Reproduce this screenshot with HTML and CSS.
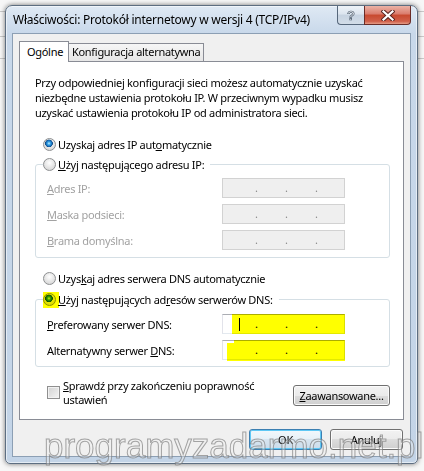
FILE: index.html
```html
<!DOCTYPE html>
<html lang="pl">
<head>
    <meta charset="UTF-8">
    <meta name="viewport" content="width=device-width, initial-scale=1.0">
    <title>Właściwości: Protokół internetowy w wersji 4 (TCP/IPv4)</title>
    <link rel="stylesheet" href="styles.css">
</head>
<body>
    <div class="window">
        <div class="titlebar">
            <div class="title">Właściwości: Protokół internetowy w wersji 4 (TCP/IPv4)</div>
            <div class="caption-buttons">
                <div class="cap-btn help">?</div>
                <div class="cap-btn close">
                    <svg width="14" height="11" viewBox="0 0 14 11">
                        <path d="M2.5 1.5 L11.5 9.5 M11.5 1.5 L2.5 9.5" stroke="#5a2521" stroke-width="4.2" stroke-linecap="square" fill="none"/>
                        <path d="M2.5 1.5 L11.5 9.5 M11.5 1.5 L2.5 9.5" stroke="#ffffff" stroke-width="2.2" stroke-linecap="square" fill="none"/>
                    </svg>
                </div>
            </div>
        </div>

        <div class="client">
            <div class="tabs">
                <div class="tab active">Ogólne</div>
                <div class="tab">Konfiguracja alternatywna</div>
            </div>

            <div class="page">
                <p class="intro">Przy odpowiedniej konfiguracji sieci możesz automatycznie uzyskać<br>niezbędne ustawienia protokołu IP. W przeciwnym wypadku musisz<br>uzyskać ustawienia protokołu IP od administratora sieci.</p>

                <div class="option ip-auto"><span class="radio on"></span><span>Uzyskaj adres IP aut<u>o</u>matycznie</span></div>

                <fieldset class="group">
                    <legend class="option"><span class="radio"></span><span><u>U</u>żyj następującego adresu IP:</span></legend>
                    <div class="fields">
                        <div class="field disabled">
                            <label><u>A</u>dres IP:</label>
                            <div class="ip"><span>.</span><span>.</span><span>.</span></div>
                        </div>
                        <div class="field disabled">
                            <label><u>M</u>aska podsieci:</label>
                            <div class="ip"><span>.</span><span>.</span><span>.</span></div>
                        </div>
                        <div class="field disabled">
                            <label><u>B</u>rama domyślna:</label>
                            <div class="ip"><span>.</span><span>.</span><span>.</span></div>
                        </div>
                    </div>
                </fieldset>

                <div class="option dns-auto"><span class="radio"></span><span>Uzys<u>k</u>aj adres serwera DNS automatycznie</span></div>

                <fieldset class="group dns-group">
                    <legend class="option marked"><span class="radio on"></span><span><u>U</u>żyj następujących ad<u>r</u>esów serwerów DNS:</span><span class="hl hl-radio"></span></legend>
                    <div class="fields">
                        <div class="field">
                            <label><u>P</u>referowany serwer DNS:</label>
                            <div class="ip"><span>.</span><span>.</span><span>.</span><i class="caret"></i><i class="hl hl-box1"></i></div>
                        </div>
                        <div class="field">
                            <label>Alternatywny serwer <u>D</u>NS:</label>
                            <div class="ip"><span>.</span><span>.</span><span>.</span><i class="hl hl-box2"></i></div>
                        </div>
                    </div>
                </fieldset>

                <div class="check-row">
                    <span class="checkbox"></span>
                    <label class="check-label"><u>S</u>prawdź przy zakończeniu poprawność ustawień</label>
                    <button class="btn advanced"><u>Z</u>aawansowane...</button>
                </div>
            </div>

            <div class="dialog-buttons">
                <button class="btn default">OK</button>
                <button class="btn">Anuluj</button>
            </div>
        </div>
    </div>

    <div class="watermark">programyzadarmo.net.pl</div>
</body>
</html>
```

FILE: styles.css
```css
body {
    margin: 0;
    width: 424px;
    height: 471px;
    overflow: hidden;
    position: relative;
    background-color: #f7f7f7;
    background-image:
        linear-gradient(#c9c9c9, #c9c9c9),
        linear-gradient(#c9c9c9, #c9c9c9),
        linear-gradient(#c9c9c9, #c9c9c9);
    background-size: 100% 1px;
    background-position: 0 11px, 0 36px, 0 58px;
    background-repeat: no-repeat;
    font-family: "Noto Sans", "Segoe UI", sans-serif;
    font-size: 11px;
    letter-spacing: -0.3px;
    color: #000;
}

.window {
    margin: 5px 6px 0 5px;
    height: 459px;
    box-sizing: border-box;
    border: 1px solid #5d6e81;
    border-radius: 7px 7px 5px 5px;
    background: linear-gradient(#dfe9f4, #c8d8ea 28px, #c3d4e7);
    box-shadow: 0 0 5px rgba(0, 0, 0, 0.55), inset 0 0 0 1px rgba(255, 255, 255, 0.55);
    padding: 0 6px 6px;
    display: flex;
    flex-direction: column;
}

.titlebar {
    height: 27px;
    display: flex;
    align-items: flex-start;
}
.title {
    flex: 1;
    padding-left: 1px;
    line-height: 27px;
    font-size: 12px;
    letter-spacing: -0.25px;
    white-space: nowrap;
}
.caption-buttons {
    display: flex;
}
.cap-btn {
    height: 19px;
    box-sizing: border-box;
    border: 1px solid #56677b;
    border-top: none;
    display: flex;
    align-items: center;
    justify-content: center;
}
.help {
    width: 27px;
    border-right: none;
    border-radius: 0 0 0 4px;
    background: linear-gradient(#eef3f8, #dce5ef 45%, #c6d3e1 50%, #d3dde8);
    font-family: "Liberation Sans", sans-serif;
    font-weight: bold;
    font-size: 13px;
    letter-spacing: 0;
    color: #f5f7fa;
    -webkit-text-stroke: 0.7px #4b5a6b;
}
.close {
    width: 47px;
    border-color: #6a2c27;
    border-radius: 0 0 4px 0;
    background: linear-gradient(#ebb3a6, #da7b6c 45%, #c8492f 50%, #d0604a 85%, #e59c86);
}

.client {
    flex: 1;
    background: #f0f0f0;
    border: 1px solid #8c9fb4;
    padding: 0 6px;
    display: flex;
    flex-direction: column;
}

.tabs {
    display: flex;
    align-items: flex-end;
    margin-top: 7px;
    height: 20px;
}
.tab {
    height: 18px;
    box-sizing: border-box;
    border: 1px solid #898c95;
    border-bottom: none;
    padding-left: 3px;
    line-height: 16px;
    width: 136px;
    margin-left: -1px;
    background: linear-gradient(#f6f6f6, #e6e6e6);
    white-space: nowrap;
}
.tab.active {
    position: relative;
    z-index: 1;
    height: 21px;
    width: 50px;
    margin: 0 0 -1px 0;
    padding-left: 7px;
    line-height: 19px;
    background: #fff;
}

.page {
    height: 359px;
    box-sizing: border-box;
    border: 1px solid #898c95;
    background: #fff;
    padding: 13px 13px 0 15px;
}

.intro {
    margin: 0;
    line-height: 15px;
}

.option {
    display: flex;
    align-items: center;
    gap: 2px;
    height: 15px;
    padding-left: 8px;
    white-space: nowrap;
}
.ip-auto {
    margin-top: 17px;
}
.dns-auto {
    margin-top: 13px;
}

.radio {
    flex: none;
    width: 13px;
    height: 13px;
    box-sizing: border-box;
    border: 1px solid #8d8f91;
    border-radius: 50%;
    background: radial-gradient(circle at 50% 35%, #ffffff, #e4e4e4 55%, #cfcfcf);
}
.radio.on {
    background:
        radial-gradient(circle at 45% 40%, #c9f0ff 0, #3aa6e8 1.5px, #1569b5 3px, #0c4a87 3.6px, transparent 4.1px),
        radial-gradient(circle at 50% 35%, #ffffff, #e4e4e4 55%, #cfcfcf);
}

.group {
    margin: 5px 0 0;
    padding: 0;
    min-width: 0;
    border: 1px solid #d5dfe5;
    border-radius: 3px;
}
.group legend {
    margin-left: 7px;
    padding: 0 6px 0 0;
}
.dns-group {
    margin-top: 6px;
}
.marked {
    position: relative;
}

.fields {
    padding: 6px 0 7px 11px;
    display: flex;
    flex-direction: column;
    gap: 6px;
}
.dns-group .fields {
    padding-top: 7px;
    padding-bottom: 6px;
}
.field {
    display: flex;
    align-items: center;
    height: 20px;
}
.field label {
    width: 175px;
    white-space: nowrap;
}
.field.disabled label {
    color: #a2a2a2;
}

.ip {
    position: relative;
    width: 123px;
    height: 20px;
    box-sizing: border-box;
    border: 1px solid #abadb3;
    border-color: #abadb3 #dbdfe6 #e3e9ef #e2e3ea;
    background: #fff;
    display: flex;
    align-items: center;
    padding-left: 32px;
    gap: 28px;
    line-height: 18px;
}
.ip span {
    width: 2px;
}
.field.disabled .ip {
    background: #efefef;
    border-color: #d2d2d2;
    color: #8c8c8c;
}

.caret {
    position: absolute;
    left: 16px;
    top: 3px;
    width: 1px;
    height: 13px;
    background: #000;
}

.hl {
    position: absolute;
    background: #ffff00;
    mix-blend-mode: multiply;
}
.hl-radio {
    left: 0;
    top: 0;
    width: 16px;
    height: 16px;
}
.hl-box1 {
    left: 9px;
    top: -1px;
    right: -1px;
    bottom: -1px;
}
.hl-box2 {
    left: 4px;
    top: -1px;
    right: -1px;
    bottom: -2px;
    clip-path: polygon(7px 0, 100% 0, 100% 100%, 0 100%, 0 3px, 7px 3px);
}

.check-row {
    margin-top: 12px;
    padding-left: 12px;
    display: flex;
    align-items: flex-start;
}
.checkbox {
    flex: none;
    width: 13px;
    height: 13px;
    margin-top: 7px;
    box-sizing: border-box;
    border: 1px solid #8f8f8f;
    background: linear-gradient(135deg, #d2d2d2, #f4f4f4);
    box-shadow: inset 0 0 0 1px #f2f2f2;
}
.check-label {
    margin-left: 3px;
    width: 215px;
    line-height: 14px;
}

.btn {
    font: inherit;
    letter-spacing: inherit;
    color: #000;
    height: 21px;
    box-sizing: border-box;
    padding: 0;
    border: 1px solid #707070;
    border-radius: 3px;
    background: linear-gradient(#f2f2f2, #ebebeb 50%, #dddddd 50%, #cfcfcf);
    box-shadow: inset 0 0 0 1px #fbfbfb;
}
.btn.advanced {
    margin-left: auto;
    margin-top: 6px;
    width: 97px;
}
.btn.default {
    border-color: #3c7fb1;
    background: linear-gradient(#f2f8fc, #e6f0f7 50%, #d7e5f0 50%, #cbdceb);
    box-shadow: inset 0 0 0 1px #5fc8f5;
}

.dialog-buttons {
    display: flex;
    justify-content: flex-end;
    gap: 8px;
    margin-top: 9px;
    padding-right: 1px;
}
.dialog-buttons .btn {
    width: 73px;
}

.watermark {
    position: absolute;
    left: 44px;
    top: 428px;
    font-family: "Liberation Sans", Arial, sans-serif;
    font-size: 35px;
    line-height: 35px;
    letter-spacing: 0;
    white-space: nowrap;
    color: rgba(240, 240, 240, 0.35);
    -webkit-text-stroke: 1px rgba(120, 120, 120, 0.65);
    pointer-events: none;
}
```
